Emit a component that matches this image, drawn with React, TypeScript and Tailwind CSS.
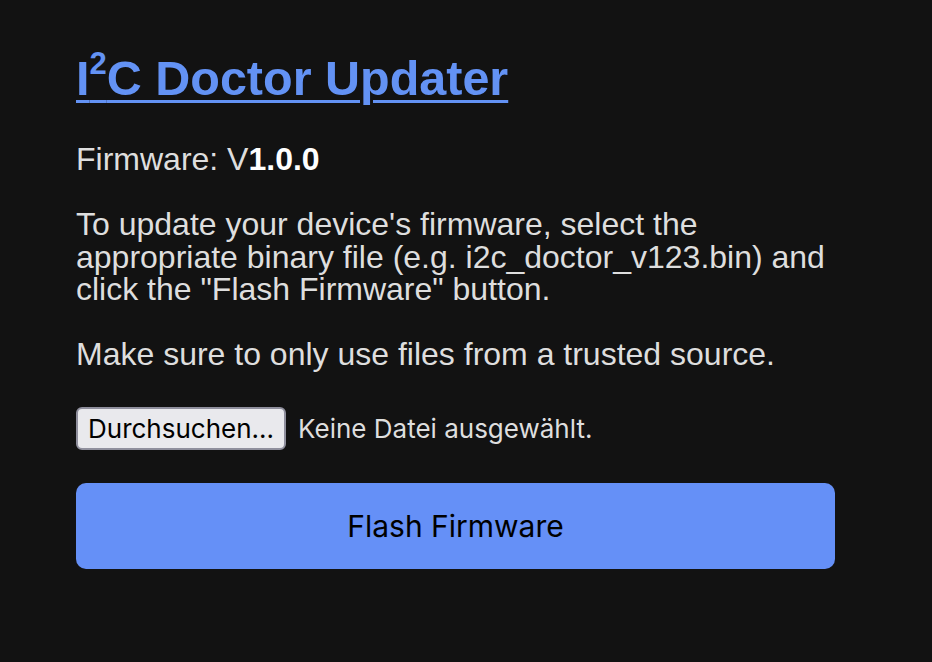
import React from "react";

const App: React.FC = () => {
  return (
    <div
      className="min-h-screen w-full bg-[#121212] text-[#dedede]"
      style={{ fontFamily: '"Liberation Sans", Arial, sans-serif' }}
    >
      <main className="w-[759px] ml-[76px] pt-[50px] pb-10 flex flex-col">
        {/* Titel */}
        <h1 className="text-[48.5px] leading-[56px] font-bold">
          <a href="#" className="text-[#6392f4] underline decoration-[3px] underline-offset-[5px]">
            I<sup className="text-[31px] relative top-[-21px]">2</sup>C Doctor Updater
          </a>
        </h1>

        <p className="mt-[37px] text-[32px] leading-[32.5px]">
          Firmware: V<span className="font-bold text-white">1.0.0</span>
        </p>

        <p className="mt-[32.5px] text-[32px] leading-[32.5px]">
          To update your device's firmware, select the appropriate binary file (e.g.
          i2c_doctor_v123.bin) and click the "Flash Firmware" button.
        </p>

        <p className="mt-[32.5px] text-[32px] leading-[32.5px]">
          Make sure to only use files from a trusted source.
        </p>

        {/* Datei-Auswahl */}
        <div
          className="mt-[36.5px] flex items-center gap-[12px]"
          style={{ fontFamily: "Inter, sans-serif" }}
        >
          <label className="h-[43px] px-[10px] flex items-center rounded-[6px] border-2 border-[#8f8f9d] bg-[#e9e9ed] text-black text-[26px] cursor-pointer">
            Durchsuchen...
            <input type="file" className="hidden" />
          </label>
          <span className="text-[26px] text-[#dedede]">Keine Datei ausgewählt.</span>
        </div>

        <button
          className="mt-[33px] h-[86px] w-full rounded-[10px] bg-[#6590f7] text-black text-[30px]"
          style={{ fontFamily: "Inter, sans-serif" }}
        >
          Flash Firmware
        </button>
      </main>
    </div>
  );
};

export default App;
